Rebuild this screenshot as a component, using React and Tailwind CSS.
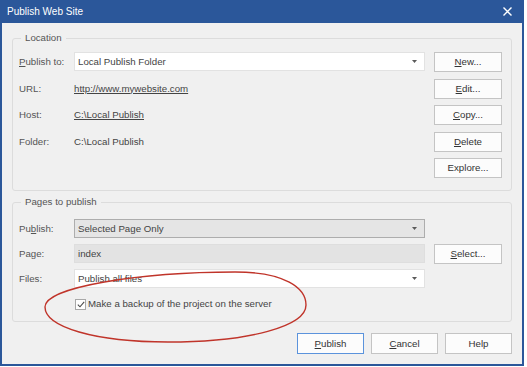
import React from 'react';

const Arrow = () => (
  <svg width="5" height="3" viewBox="0 0 5 3" className="shrink-0">
    <path d="M0 0h5L2.5 3z" fill="#5a5a5a" />
  </svg>
);

const Combo = ({ value, gray }) => (
  <div
    className={
      gray
        ? 'h-[19px] flex items-center justify-between pl-[3px] pr-[7px] bg-[#e5e5e5] border border-[#adadad]'
        : 'h-[19px] flex items-center justify-between pl-[3px] pr-[7px] bg-white border border-[#e2e2e2]'
    }
  >
    <span>{value}</span>
    <Arrow />
  </div>
);

const Btn = ({ children, primary }) => (
  <button
    className={
      primary
        ? 'h-[21px] w-[67px] bg-[#fcfcfc] border border-[#5b93dc] text-[#333] text-center'
        : 'h-[21px] w-[67px] bg-[#fcfcfc] border border-[#c4c4c4] text-[#333] text-center'
    }
  >
    {children}
  </button>
);

const SideBtn = ({ children }) => (
  <button className="h-[20px] w-[68px] justify-self-end bg-[#fcfcfc] border border-[#c4c4c4] text-[#333] text-center">
    {children}
  </button>
);

const Label = ({ children }) => <span className="text-[#555] self-center">{children}</span>;

export default function App() {
  return (
    <div className="w-[527px] h-[367px] bg-white font-['Liberation_Sans',Arial,sans-serif] text-[9.7px] leading-[12px]">
      <div className="w-[524px] h-[366px] bg-[#2b579a] px-[2px] pb-[2px] flex flex-col">
        {/* Title bar */}
        <div className="h-[23px] flex items-center justify-between pl-[5px] pr-[10px] text-white text-[10px]">
          <span>Publish Web Site</span>
          <svg width="9" height="9" viewBox="0 0 9 9">
            <path d="M0.5 0.5l8 8M8.5 0.5l-8 8" stroke="white" strokeWidth="1.4" />
          </svg>
        </div>

        <div className="flex-1 bg-[#f0f0f0] px-[10px]">
          {/* Location */}
          <fieldset className="mt-[8px] border border-[#dcdcdc] rounded-[3px] pl-[6px] pr-[9px] pt-[7px] pb-[12px]">
            <legend className="ml-[2px] px-[4px] leading-[14px] text-[#555]">Location</legend>
            <div className="grid grid-cols-[55px_351px_1fr] grid-rows-[20px_20px_20px_20px_20px] gap-y-[6.5px] text-[#444]">
              <Label><u>P</u>ublish to:</Label>
              <div className="self-start">
                <Combo value="Local Publish Folder" />
              </div>
              <SideBtn><u>N</u>ew...</SideBtn>

              <Label>URL:</Label>
              <span className="self-center underline">http://www.mywebsite.com</span>
              <SideBtn><u>E</u>dit...</SideBtn>

              <Label>Host:</Label>
              <span className="self-center underline">C:\Local Publish</span>
              <SideBtn><u>C</u>opy...</SideBtn>

              <Label>Folder:</Label>
              <span className="self-center">C:\Local Publish</span>
              <SideBtn><u>D</u>elete</SideBtn>

              <span />
              <span />
              <SideBtn>Explore...</SideBtn>
            </div>
          </fieldset>

          {/* Pages to publish */}
          <fieldset className="mt-[4px] border border-[#dcdcdc] rounded-[3px] pl-[6px] pr-[9px] pt-[10px] pb-[11px]">
            <legend className="ml-[2px] px-[4px] leading-[14px] text-[#555]">Pages to publish</legend>
            <div className="grid grid-cols-[55px_351px_1fr] grid-rows-[19px_19px_19px] gap-y-[6px] text-[#444]">
              <Label>Pu<u>b</u>lish:</Label>
              <Combo value="Selected Page Only" gray />
              <span />

              <Label>Page:</Label>
              <div className="h-[19px] flex items-center pl-[3px] border border-[#dedede] bg-[#e3e3e3]">index</div>
              <SideBtn><u>S</u>elect...</SideBtn>

              <Label>Files:</Label>
              <Combo value="Publish all files" />
              <span />
            </div>
            <div className="mt-[10px] ml-[56px] h-[12px] flex items-center gap-[2px] text-[#444]">
              <div className="w-[11px] h-[11px] border border-[#a8a8a8] bg-white flex items-center justify-center">
                <svg width="8" height="7" viewBox="0 0 8 7">
                  <path d="M0.8 3.6l2.2 2.2L7.2 0.9" stroke="#4a4a4a" strokeWidth="1.1" fill="none" />
                </svg>
              </div>
              <span>Make a backup of the project on the server</span>
            </div>
          </fieldset>

          {/* Bottom buttons */}
          <div className="mt-[11px] flex justify-end gap-[7px]">
            <Btn primary><u>P</u>ublish</Btn>
            <Btn><u>C</u>ancel</Btn>
            <Btn>Help</Btn>
          </div>
        </div>
      </div>

      {/* red annotation ellipse */}
      <svg className="absolute left-0 top-0 pointer-events-none" width="527" height="367" viewBox="0 0 527 367">
        <path
          d="M45 307 C45 287 140 272 235 272 C285 272 306 288 306 305 C306 326 250 342 168 342 C95 342 45 327 45 307 Z"
          fill="none"
          stroke="#c0342a"
          strokeWidth="1.4"
        />
      </svg>
    </div>
  );
}
